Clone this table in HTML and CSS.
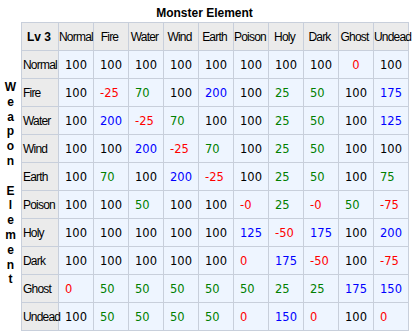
FILE: index.html
```html
<!DOCTYPE html>
<html>
<head>
<meta charset="utf-8">
<link rel="stylesheet" href="styles.css">
</head>
<body>
<div class="wrap">
  <div class="title">Monster Element</div>
  <div class="main">
    <div class="side">W<br>e<br>a<br>p<br>o<br>n<br>&nbsp;<br>E<br>l<br>e<br>m<br>e<br>n<br>t</div>
    <table class="grid">
      <colgroup>
        <col class="c0"><col class="cd"><col class="cd"><col class="cd"><col class="cd"><col class="cd"><col class="cd"><col class="cd"><col class="cd"><col class="cd"><col class="cd">
      </colgroup>
      <tr class="head">
        <th class="lv">Lv 3</th><th>Normal</th><th>Fire</th><th>Water</th><th>Wind</th><th>Earth</th><th>Poison</th><th>Holy</th><th>Dark</th><th>Ghost</th><th>Undead</th>
      </tr>
      <tr><th class="rl">Normal</th><td>100</td><td>100</td><td>100</td><td>100</td><td>100</td><td>100</td><td>100</td><td>100</td><td class="r ctr">0</td><td>100</td></tr>
      <tr><th class="rl">Fire</th><td>100</td><td class="r">-25</td><td class="g">70</td><td>100</td><td class="b">200</td><td>100</td><td class="g">25</td><td class="g">50</td><td>100</td><td class="b">175</td></tr>
      <tr><th class="rl">Water</th><td>100</td><td class="b">200</td><td class="r">-25</td><td class="g">70</td><td>100</td><td>100</td><td class="g">25</td><td class="g">50</td><td>100</td><td class="b">125</td></tr>
      <tr><th class="rl">Wind</th><td>100</td><td>100</td><td class="b">200</td><td class="r">-25</td><td class="g">70</td><td>100</td><td class="g">25</td><td class="g">50</td><td>100</td><td>100</td></tr>
      <tr><th class="rl">Earth</th><td>100</td><td class="g">70</td><td>100</td><td class="b">200</td><td class="r">-25</td><td>100</td><td class="g">25</td><td class="g">50</td><td>100</td><td class="g">75</td></tr>
      <tr><th class="rl">Poison</th><td>100</td><td>100</td><td class="g">50</td><td>100</td><td>100</td><td class="r">-0</td><td class="g">25</td><td class="r">-0</td><td class="g">50</td><td class="r">-75</td></tr>
      <tr><th class="rl">Holy</th><td>100</td><td>100</td><td>100</td><td>100</td><td>100</td><td class="b">125</td><td class="r">-50</td><td class="b">175</td><td>100</td><td class="b">200</td></tr>
      <tr><th class="rl">Dark</th><td>100</td><td>100</td><td>100</td><td>100</td><td>100</td><td class="r">0</td><td class="b">175</td><td class="r">-50</td><td>100</td><td class="r">-75</td></tr>
      <tr><th class="rl">Ghost</th><td class="r">0</td><td class="g">50</td><td class="g">50</td><td class="g">50</td><td class="g">50</td><td class="g">50</td><td class="g">25</td><td class="g">25</td><td class="b">175</td><td class="b">150</td></tr>
      <tr><th class="rl">Undead</th><td>100</td><td class="g">50</td><td class="g">50</td><td class="g">50</td><td class="g">50</td><td class="r">0</td><td class="b">150</td><td class="r">0</td><td>100</td><td class="r">0</td></tr>
    </table>
  </div>
</div>
</body>
</html>
```
FILE: styles.css
```css
html, body {
  margin: 0;
  padding: 0;
  background: #ffffff;
}
.wrap {
  width: 409px;
}
.title {
  font-family: "Liberation Sans", Arial, sans-serif;
  font-weight: bold;
  font-size: 12px;
  line-height: 14px;
  padding-top: 6px;
  height: 16px;
  text-align: center;
  color: #000;
}
.main {
  display: flex;
  align-items: flex-start;
}
.side {
  width: 21px;
  flex: 0 0 21px;
  padding-top: 58px;
  font-family: "Liberation Sans", Arial, sans-serif;
  font-weight: bold;
  font-size: 12px;
  line-height: 14.8px;
  text-align: center;
  color: #000;
}
.grid {
  border-collapse: collapse;
  table-layout: fixed;
  width: 388px;
  border: 1px solid #c8cfdb;
}
.c0 { width: 37px; }
.cd { width: 35px; }
.grid tr {
  height: 28px;
}
.grid th,
.grid td {
  border: 1px solid #c8cfdb;
  padding: 0;
  white-space: nowrap;
  vertical-align: middle;
}
.grid th {
  background: #ebebeb;
  font-family: "Liberation Sans", Arial, sans-serif;
  font-weight: normal;
  font-size: 12px;
  letter-spacing: -0.8px;
  color: #000;
}
.head th {
  text-align: center;
  padding-right: 3px;
}
.head th.lv {
  font-weight: bold;
  font-size: 12px;
  letter-spacing: 0;
  padding-right: 2px;
}
th.rl {
  text-align: left;
  padding-left: 1px;
}
.grid td {
  background: #eef5ff;
  font-family: "DejaVu Sans", Verdana, sans-serif;
  font-size: 11.5px;
  text-align: left;
  padding-left: 6px;
  color: #000;
}
.grid td.ctr {
  text-align: center;
  padding-left: 0;
}
.grid td.r { color: #ff0000; }
.grid td.g { color: #008000; }
.grid td.b { color: #0000ff; }
```
